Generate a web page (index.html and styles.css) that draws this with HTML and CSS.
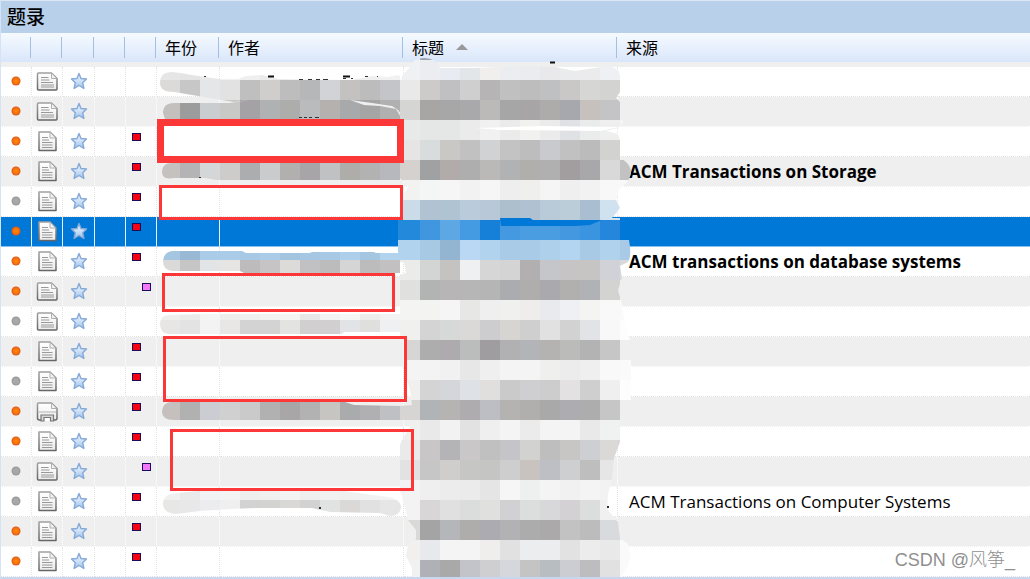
FILE: index.html
```
<!DOCTYPE html>
<html lang="zh-CN">
  <head>
    <meta charset="utf-8">
    <title>题录</title>
    <link rel="stylesheet" href="styles.css">
  </head>
  <body>
    <svg class="defs" width="0" height="0" aria-hidden="true">
      <defs>
        <radialGradient id="orange">
          <stop offset="0" stop-color="#ff8a0c"/>
          <stop offset="0.6" stop-color="#f97306"/>
          <stop offset="1" stop-color="#d9541e"/>
        </radialGradient>
        <linearGradient id="paper" x1="0" y1="0" x2="0" y2="1">
          <stop offset="0" stop-color="#ffffff"/>
          <stop offset="1" stop-color="#ececec"/>
        </linearGradient>
        <linearGradient id="edge" x1="0" y1="0" x2="0" y2="1">
          <stop offset="0" stop-color="#a0a0a0"/>
          <stop offset="1" stop-color="#666666"/>
        </linearGradient>
        <linearGradient id="sky" x1="0" y1="0" x2="0" y2="1">
          <stop offset="0" stop-color="#e0edfb"/>
          <stop offset="0.5" stop-color="#cfe2f8"/>
          <stop offset="1" stop-color="#98bfea"/>
        </linearGradient>
      </defs>
      <symbol id="dot" viewBox="0 0 10 10">
        <circle cx="5" cy="5" r="4.5" fill="url(#orange)"/>
      </symbol>
      <symbol id="dot-read" viewBox="0 0 10 10">
        <circle cx="5" cy="5" r="4.5" fill="#9c9c9c"/>
        <circle cx="5" cy="5" r="3" fill="#a8a8a8"/>
      </symbol>
      <symbol id="page" viewBox="0 0 22 22">
        <path d="M3 2H14L20 8V20.500H3Z" fill="url(#paper)" stroke="url(#edge)" stroke-width="1.500" stroke-linejoin="round"/>
        <path d="M14 2.500V8H19.500" fill="#f2f2f2" stroke="#b0b0b0"/>
        <path d="M6 7.500H12M6 10H13M6 12.500H16.500M6 15H16.500M6 17.500H16.500" stroke="#999" stroke-width="1.200"/>
      </symbol>
      <symbol id="page-wide" viewBox="0 0 22 22">
        <path d="M2.500 3H15.500L21 8.500V19Q21 20 20 20H2.500Q1.500 20 1.500 19V4Q1.500 3 2.500 3Z" fill="url(#paper)" stroke="url(#edge)" stroke-width="1.500" stroke-linejoin="round"/>
        <path d="M15.500 3.500V8.500H20.500" fill="#f2f2f2" stroke="#b0b0b0"/>
        <path d="M5 7.500H12.500M5 10H13.500M5 12.500H17M5 15H18M5 17H18" stroke="#999" stroke-width="1.200"/>
      </symbol>
      <symbol id="page-print" viewBox="0 0 22 22">
        <path d="M2.500 3H15.500L21 8.500V18Q21 20 19 20H3.500Q1.500 20 1.500 18V4Q1.500 3 2.500 3Z" fill="url(#paper)" stroke="url(#edge)" stroke-width="1.500" stroke-linejoin="round"/>
        <path d="M15.500 3.500V8.500H20.500" fill="#f2f2f2" stroke="#b0b0b0"/>
        <path d="M2.500 12H20" stroke="#b4b4b4"/>
        <path d="M7.500 18H15V21H7.500Z" fill="#fff"/>
        <path d="M5 21V15H17.500V21H14.500V17.500H8V21Z" fill="#d8d8d8" stroke="#777" stroke-width="1.200"/>
      </symbol>
      <symbol id="star" viewBox="0 0 18 18">
        <path d="M9 1.500L11 6.500L16.500 7L12.700 10.700L13.900 16.500L9 13.500L4.100 16.500L5.300 10.700L1.500 7L7 6.500Z" fill="url(#sky)" stroke="#86a9d6" stroke-width="1.400" stroke-linejoin="round"/>
      </symbol>
    </svg>

    <main class="library">
      <h1 class="caption">题录</h1>
      <table class="records">
        <colgroup>
          <col class="c-icon"><col class="c-icon"><col class="c-gap"><col class="c-icon"><col class="c-icon">
          <col class="c-year"><col class="c-author"><col class="c-title"><col>
        </colgroup>
        <thead>
          <tr>
            <th></th><th></th><th></th><th></th><th></th>
            <th>年份</th>
            <th>作者</th>
            <th><button class="sort" type="button">标题 <span class="arrow"></span></button></th>
            <th>来源</th>
          </tr>
        </thead>
        <tbody>
          <tr>
            <td><svg class="dot"><use href="#dot"/></svg></td>
            <td><svg class="doc"><use href="#page-wide"/></svg></td>
            <td><svg class="star"><use href="#star"/></svg></td>
            <td></td><td></td><td></td><td></td><td></td><td></td>
          </tr>
          <tr>
            <td><svg class="dot"><use href="#dot"/></svg></td>
            <td><svg class="doc"><use href="#page-wide"/></svg></td>
            <td><svg class="star"><use href="#star"/></svg></td>
            <td></td><td></td><td></td><td></td><td></td><td></td>
          </tr>
          <tr>
            <td><svg class="dot"><use href="#dot"/></svg></td>
            <td><svg class="doc"><use href="#page"/></svg></td>
            <td><svg class="star"><use href="#star"/></svg></td>
            <td></td><td class="mark"><i class="flag"></i></td><td></td><td></td><td></td><td></td>
          </tr>
          <tr class="unread">
            <td><svg class="dot"><use href="#dot"/></svg></td>
            <td><svg class="doc"><use href="#page"/></svg></td>
            <td><svg class="star"><use href="#star"/></svg></td>
            <td></td><td class="mark"><i class="flag"></i></td><td></td><td></td><td></td>
            <td>ACM Transactions on Storage</td>
          </tr>
          <tr>
            <td><svg class="dot"><use href="#dot-read"/></svg></td>
            <td><svg class="doc"><use href="#page"/></svg></td>
            <td><svg class="star"><use href="#star"/></svg></td>
            <td></td><td class="mark"><i class="flag"></i></td><td></td><td></td><td></td><td></td>
          </tr>
          <tr class="selected">
            <td><svg class="dot"><use href="#dot"/></svg></td>
            <td><svg class="doc"><use href="#page"/></svg></td>
            <td><svg class="star"><use href="#star"/></svg></td>
            <td></td><td class="mark"><i class="flag"></i></td><td></td><td></td><td></td><td></td>
          </tr>
          <tr class="unread">
            <td><svg class="dot"><use href="#dot"/></svg></td>
            <td><svg class="doc"><use href="#page"/></svg></td>
            <td><svg class="star"><use href="#star"/></svg></td>
            <td></td><td class="mark"><i class="flag"></i></td><td></td><td></td><td></td>
            <td>ACM transactions on database systems</td>
          </tr>
          <tr>
            <td><svg class="dot"><use href="#dot"/></svg></td>
            <td><svg class="doc"><use href="#page-wide"/></svg></td>
            <td><svg class="star"><use href="#star"/></svg></td>
            <td></td><td class="mark"><i class="flag pink"></i></td><td></td><td></td><td></td><td></td>
          </tr>
          <tr>
            <td><svg class="dot"><use href="#dot-read"/></svg></td>
            <td><svg class="doc"><use href="#page-wide"/></svg></td>
            <td><svg class="star"><use href="#star"/></svg></td>
            <td></td><td></td><td></td><td></td><td></td><td></td>
          </tr>
          <tr>
            <td><svg class="dot"><use href="#dot"/></svg></td>
            <td><svg class="doc"><use href="#page"/></svg></td>
            <td><svg class="star"><use href="#star"/></svg></td>
            <td></td><td class="mark"><i class="flag"></i></td><td></td><td></td><td></td><td></td>
          </tr>
          <tr>
            <td><svg class="dot"><use href="#dot-read"/></svg></td>
            <td><svg class="doc"><use href="#page"/></svg></td>
            <td><svg class="star"><use href="#star"/></svg></td>
            <td></td><td class="mark"><i class="flag"></i></td><td></td><td></td><td></td><td></td>
          </tr>
          <tr>
            <td><svg class="dot"><use href="#dot"/></svg></td>
            <td><svg class="doc"><use href="#page-print"/></svg></td>
            <td><svg class="star"><use href="#star"/></svg></td>
            <td></td><td class="mark"><i class="flag"></i></td><td></td><td></td><td></td><td></td>
          </tr>
          <tr>
            <td><svg class="dot"><use href="#dot"/></svg></td>
            <td><svg class="doc"><use href="#page"/></svg></td>
            <td><svg class="star"><use href="#star"/></svg></td>
            <td></td><td class="mark"><i class="flag"></i></td><td></td><td></td><td></td><td></td>
          </tr>
          <tr>
            <td><svg class="dot"><use href="#dot-read"/></svg></td>
            <td><svg class="doc"><use href="#page-wide"/></svg></td>
            <td><svg class="star"><use href="#star"/></svg></td>
            <td></td><td class="mark"><i class="flag pink"></i></td><td></td><td></td><td></td><td></td>
          </tr>
          <tr>
            <td><svg class="dot"><use href="#dot-read"/></svg></td>
            <td><svg class="doc"><use href="#page"/></svg></td>
            <td><svg class="star"><use href="#star"/></svg></td>
            <td></td><td class="mark"><i class="flag"></i></td><td></td><td></td><td></td>
            <td>ACM Transactions on Computer Systems</td>
          </tr>
          <tr>
            <td><svg class="dot"><use href="#dot"/></svg></td>
            <td><svg class="doc"><use href="#page"/></svg></td>
            <td><svg class="star"><use href="#star"/></svg></td>
            <td></td><td class="mark"><i class="flag"></i></td><td></td><td></td><td></td><td></td>
          </tr>
          <tr>
            <td><svg class="dot"><use href="#dot"/></svg></td>
            <td><svg class="doc"><use href="#page"/></svg></td>
            <td><svg class="star"><use href="#star"/></svg></td>
            <td></td><td class="mark"><i class="flag"></i></td><td></td><td></td><td></td><td></td>
          </tr>
        </tbody>
      </table>

      <svg class="overlay" width="820" height="579" viewBox="0 0 820 579" aria-hidden="true">
        <defs>
          <clipPath id="clip-author">
            <path d="M160 83Q160 72 172 72L180 73L198 76L220 79L238 79L246 76L262 75L278 79L352 80L372 76L388 77L398 75Q405 78 402 88V104L404 118L398 110L392 106L372 103L350 100H250L234 102L198 96L174 92Q160 92 160 83Z"/>
            <path d="M163 113Q163 103 174 103H230L250 100H350L364 105L380 106L396 109L402 119H165Z"/>
            <path d="M162 172Q162 163 172 163H402V180H216L205 178H174Q162 180 162 172Z"/>
            <path d="M163 261Q164 251 174 251H242L246 253L310 253L312 252H374L376 253H404V273H244L240 271H172Q163 270 163 261Z"/>
            <path d="M160 324Q160 315 170 315L206 314H404V332H344L342 334H170Q160 334 160 324Z"/>
            <path d="M162 411Q163 402 172 402H345L354 405L402 406V420H174Q162 420 162 411Z"/>
            <path d="M163 504Q163 494 176 493L198 491H344L380 496Q400 497 401 507Q400 516 390 516L380 513L330 512L312 508H258L230 509L200 511L176 514Q163 513 163 504Z"/>
          </clipPath>
          <clipPath id="clip-title">
            <path d="M402 76L409 68Q412 58 424 58Q436 58 440 68L475 68L520 66L555 67L575 71L608 66Q620 68 620 76V92L616 98L620 102V118L624 122L618 128L606 131L618 134L620 140V158Q632 164 631 174Q628 184 620 188L616 200L620 208L612 218H622L629 240Q632 256 628 262L620 266L622 278L618 290L622 304L624 320L630 340L622 350V360L631 360V400H625L624 420L620 442L614 458L612 480Q606 496 608 510L618 522L620 538L628 544Q632 556 628 566L622 576V579H412V568L406 556L408 545L416 539V530L408 520L402 496L396 482L394 460L402 440L408 430L416 420L400 420V406L412 405L410 390L407 380V340L400 335L398 300V275L406 273L404 262H398V240H400V200L408 187L400 178L400 160V88Z"/>
          </clipPath>
        </defs>
        <g id="author" clip-path="url(#clip-author)"></g>
        <g id="title" clip-path="url(#clip-title)"></g>

        <!-- strokes that stick out of the blocks -->
        <path d="M398 220H401V240H398Z" fill="#238adb"/>
        <path d="M398 240H401V260H398Z" fill="#b2d3ee"/>
        <path d="M500 218H530L533 220H602L590 225L575 226H501Z" fill="#0078d7"/>
        <path d="M476 128L540 126L620 127L600 131L500 130Z" fill="#fff"/>
        <path d="M268 76.500h6M343 76.500h7M550 62.500h5" stroke="#111" stroke-width="2"/>
        <path d="M299 79.500h4M308 79.500h4M316 79.500h4M323 79.500h5M351 78.500h2M343 78.500h3M365 76.500h3M377 76.500h1M299 117.500h3M304 117.500h3M309 117.500h3M315 117.500h4M199 177.500h2M204 76.500h2" stroke="#333"/>
        <path d="M607 507h2M319 508h2" stroke="#333" stroke-width="2"/>
        <path d="M740 578.500H812" stroke="#7fa3d8" stroke-dasharray="3 2"/>

        <g class="boxes">
          <rect class="thick" x="160.500" y="122.500" width="240" height="37"/>
          <rect x="160.500" y="186.500" width="241" height="32"/>
          <rect x="163.500" y="274.500" width="230" height="36"/>
          <rect x="164.500" y="337.500" width="241" height="63"/>
          <rect x="171.500" y="430.500" width="241" height="59"/>
        </g>
      </svg>
      <p class="watermark">CSDN @风筝_</p>
    </main>

    <script src="script.js"></script>
  </body>
</html>
```
FILE: styles.css
```
:root {
  --line: #e3e3e3;
  --stripe: #efefef;
  --select: #0078d7;
  --red: #fc3737;
}
* {
  box-sizing: border-box;
}
body {
  margin: 0;
  background: #fff;
  color: #000;
  font-family: "Open Sans", "Noto Sans CJK SC", sans-serif;
  font-size: 17px;
}
.defs {
  position: absolute;
}
.library {
  position: relative;
  overflow: hidden;
  border-left: 1px solid #d5e3f7;
  border-bottom: 2px solid #c5d8f0;
}
.caption {
  margin: 0;
  padding: 0 6px;
  height: 33px;
  border-top: 1px solid #dbe7f5;
  background: #b9d0eb;
  font-family: "Noto Sans CJK SC", sans-serif;
  font-size: 19px;
  font-weight: 500;
  line-height: 29px;
}

/* record list */
.records {
  width: 100%;
  table-layout: fixed;
  border-collapse: separate;
  border-spacing: 0;
}
.c-icon {
  width: 31px;
}
.c-gap {
  width: 32px;
}
.c-year {
  width: 63px;
}
.c-author {
  width: 184px;
}
.c-title {
  width: 214px;
}
th {
  height: 34px;
  padding: 0 8px 2px;
  border-bottom: 5px solid var(--stripe);
  background:
    linear-gradient(#a3bfe5, #a3bfe5) right 1px top 4px / 1px 21px no-repeat,
    linear-gradient(#f6faff, #d9e6fa);
  background-origin: padding-box;
  font-family: "Noto Sans CJK SC", sans-serif;
  font-size: 16px;
  font-weight: 400;
  line-height: 24px;
  text-align: left;
}
th:last-child {
  background: linear-gradient(#f6faff, #d9e6fa);
}
.sort {
  display: flex;
  align-items: center;
  gap: 12px;
  padding: 0;
  border: 0;
  background: none;
  font: inherit;
}
.arrow {
  border: 6px solid transparent;
  border-top: 0;
  border-bottom-color: #999;
}
td {
  height: 30px;
  padding: 0 11px;
  border-right: 1px dotted var(--line);
  border-bottom: 1px dotted var(--line);
  line-height: 24px;
  white-space: nowrap;
}
td:last-child {
  border-right: 0;
}
tbody tr:nth-child(even) {
  --line: #fff;
  background: var(--stripe);
}
tbody .selected td {
  border-right: 1px solid #e8f2fb;
  border-bottom: 1px solid #8cc0ec;
  background: var(--select);
}
tbody .selected td:nth-child(n+7) {
  border-right: 0;
}
.unread {
  font-weight: 700;
}
td:nth-child(-n+3) {
  padding: 0 0 1px;
}
.dot, .doc, .star {
  display: block;
  margin: 0 auto;
}
.dot {
  width: 10px;
  height: 10px;
}
.doc {
  width: 22px;
  height: 22px;
}
.star {
  width: 18px;
  height: 18px;
}
td.mark {
  padding: 6px;
  vertical-align: top;
}
.flag {
  display: block;
  width: 9px;
  height: 8px;
  border: 1px solid #16105c;
  background: #fb0010;
}
.pink {
  margin-left: 10px;
  background: #f578fb;
}

/* blocks and boxes drawn over the list */
.overlay {
  position: absolute;
  top: 0;
  left: -1px;
  pointer-events: none;
}
.boxes rect {
  fill: none;
  stroke: var(--red);
  stroke-width: 3px;
}
.boxes .thick {
  fill: #fff;
  stroke-width: 7px;
}
.watermark {
  position: absolute;
  right: 15px;
  bottom: 4px;
  margin: 0;
  color: #8f8f8f;
  font-family: "Liberation Sans", "Noto Sans CJK SC", sans-serif;
  font-size: 18px;
  font-weight: 300;
  line-height: 26px;
}
```
FILE: script.js
```
const SIZE = 20;

// One row of colours for each line of blocks, keyed by its y
const author = {
  60: 'e6e6e6 e4e4e4 e7e8e9 f1f1f1 efefef ebebeb ededed f1f1f1 efefef e9ebed efefef f1f1f2',
  80: 'dbdad9 c6c7c6 e5e6e7 e2e2e2 bfbfbf d0cecc bcbdbc b6b7b9 d2d3d6 c4c2c0 bcbcbc c4c5c8 e9e9ea',
  100: 'c4c0bd 9c9c9c cacdd0 c8c8c7 a4a2a5 b0b1b3 adadac b9bbbd b5b1ae a8a9ab a5a5a5 b0b0b0',
  160: 'c5c1be b4b4b6 d5d6d8 cdccca acadaf cacbcd b1b0ae a7a5a7 c0c1c3 aeadaa b2b2b2 b7b8bd',
  240: 'a5c6e1 98b8d3 abcce8 abcce8 a8c9e5 abcce8 a3c4df a6c7e3 a8c9e5 adcfeb a5c6e1 b2d3ee',
  260: 'dbdad9 c6c6c7 e3e4e6 e6e5e4 bdbbbc c6c4c5 dcdbd9 c1c1c4 bcbcbc d5d5d5 bcbcbc c2c0c1',
  300: 'efefee ebebea f4f4f4 eeeeed f0f0f0 f3f4f2 f5f6f4 e8e8e8 f3f3f3 f6f6f6 ededec f3f3f3',
  320: 'e7e6e5 e4e3e3 f3f3f3 e8e7e6 d3d3d3 d3d3d3 e3e3e1 d2cfd0 d2cfd0 e1e3e6 dfdfdd eef0f2',
  400: 'c5c0bd b1b1b1 cccdd3 d0d0d0 cacaca b1b1b1 a9a6a7 b2b2b3 c7c5c2 a9abad b0b0b3 bfc0c4',
  480: 'f0f0f0 eaeaea f1f2f4 f3f3f3 eeeeee f0f0f0 f3f3f3 efefef f1f1f1 f0f0f0 f1f1f1 f3f3f3',
  500: 'e7e7e6 e8e8e8 ececee efefef d3d2d2 d3d4d2 dad8d6 d3d2d2 e1e3e2 dbd9d7 e1e1e1 e6e6e6 e6e6e6'
};

const title = {
  40: 'e6edf6 9aa2ae dfe7f2',
  60: 'f0f1f3 ecedf0 e8ebf1 e3e6e9 f0efee ebedf1 ebecef e9e9eb eaebec ebebed eef0f3',
  80: 'e9e9ea cccbca c0c0c2 d0cfcf b7b4b6 c0c0c1 bcbdbc bfc0c2 cac8c6 d6d6d4 d3d3d2',
  100: 'd5d5d3 a7a6a5 a7a7a7 a9a9ab bcbab8 a7a6a7 a8a5a6 aeacab a7a8ad c7c1be c4c4c6',
  120: 'e8e9e9 e4e7e6 e4e7e6 ebebeb f1f1f1 ebebeb f1f1ef ebebeb e0e1e5 e9ecea efefef f5f5f5',
  140: 'e6e5e4 d9dcdd c9c8c5 c1c1c2 d1d2d3 c4c3c3 bdbdbd c9cacd c1c1c1 bbbbbb d2d2d1',
  160: 'd5d1ce a0a1a2 b1acaa aeaeae bbb9b8 b1b2b3 b0afac b0b0b1 a29d9e a8a8aa d9d9d9 c2c2c2',
  180: 'f2f3f1 f4f6f5 f6f6f6 f2f2f2 f6f6f6 eeeeee efefee f5f5f5 efefef f2f2f2 f8f8f8 f8f8f8',
  200: 'cbdbe8 b1c3d3 b0c3d2 bacbdb b8c8d8 adbecd b0c2d1 b9cbd9 bbcdd9 aabed1 d0e1ef',
  220: '238adb 4197df 5ca7e4 459be2 1680d9 4499e0 4b9de2 4b9de2 4398e0 3b94df 2587db 0078d7',
  240: 'b2d3ee a8c9e4 94b5d2 bad8f3 b2d3ee aacbe7 aacbe7 aed0eb b3d5f1 a9cae5 b0d2ed a9cae6',
  260: 'ebebea d3d5d4 c5c2c2 eff0f2 d6d6d7 d4d4d4 b2afb1 c5c6ca c6c4c5 c7c5c4 d0d2d7 dad9d9',
  280: 'e0e0df b1b4b3 b7b5b6 b7b6b6 b5b5b5 abacaf b0aead aaaaae b1b0ae b0b2b5 d3d3d1',
  300: 'f4f4f2 f3f3f2 f5f5f5 e7e7e5 efeff0 f0f0ef efedeb e8eaed eef0f4 f4f4f3 f9f9f9 fafafa',
  320: 'f0f1ef d4d4d5 d6d9d8 dad9d7 cdcdcf d6d5d2 cfcfd0 e1e1e2 d2d2d3 e1e3e6 f8f8f8 fdfdfd',
  340: 'd7d6d4 adadae aeabae babdbb a09da0 b1b1b4 b2b4b7 b5b3b2 bbbbb9 b3b3b4 c6c6c7',
  360: 'f4f4f4 f3f3f3 f1f1f1 e7e7e7 efefef f4f4f4 f4f4f4 efefed ececec efefef f9f9f9 fafafa',
  380: 'f1f0ef d4d4d5 d4d6d9 dee1e5 e0dfdd cbcaca cfcfd1 cdcdcd e3e1e2 cfcfcf efefef fdfdfd',
  400: 'd6d5d4 b1b4b7 b6b4b3 aeacae bdbec4 b5b3b2 b0afad a9a9aa adadb1 adadae c6c6c6',
  420: 'f0f0ef e9e9e9 f2f2f2 e2e2e3 efefef f4f4f4 ebebec f4f4f4 f4f4f4 e9e9ea eff2f0',
  440: 'ebeaea c9c6c8 b4b4b7 cac7c8 c0c0c1 c5c5c9 d2d3d1 bebebe c7c6c4 cdcfd2 dad9d8',
  460: 'e2e2e2 c6c6c7 cfcecc c6c6c5 c5c5c3 cececf c9c3bf bebfc4 cdcfd1 bebebf e6e6e6',
  480: 'f3f3f3 efefef ececed eaebea e5e5e5 f6f6f6 eeefef f4f4f4 f1f1f1 f4f4f4 f2f2f2',
  500: 'f3f3f3 d8d6d7 e0e0e1 dadddc e0e0de d1d1d3 dcdddd d8d8db d3d1d3 dcdddd f0f0f0',
  520: 'd9d9d8 a4a4a5 b4b6b9 afadab acabb1 b2b2b4 acacad aca9ab c2c2c2 bcbcbd d9dadd',
  540: 'f1f0ef e8e9ec f4f4f4 f4f4f4 efeeec e1e1e1 ecedee ecedee e2e2e2 ececec e9e9e9 fafafb',
  560: 'f1f1f1 b0b1b7 a9a9a9 c3c4ca cfcfd2 d6d7dd c4c4c5 b8bdc1 cbcdd2 bdbdbf e1e1e1 fafafb'
};

function drawBlocks(group, left, rows) {
  Object.keys(rows).forEach(y => {
    rows[y].split(' ').forEach((colour, i) => {
      const rect = document.createElementNS('http://www.w3.org/2000/svg', 'rect');
      rect.setAttribute('x', left + i * SIZE);
      rect.setAttribute('y', y);
      rect.setAttribute('width', SIZE);
      rect.setAttribute('height', SIZE);
      rect.setAttribute('fill', '#' + colour);
      group.appendChild(rect);
    });
  });
}

drawBlocks(document.querySelector('#author'), 160, author);
drawBlocks(document.querySelector('#title'), 400, title);
```
